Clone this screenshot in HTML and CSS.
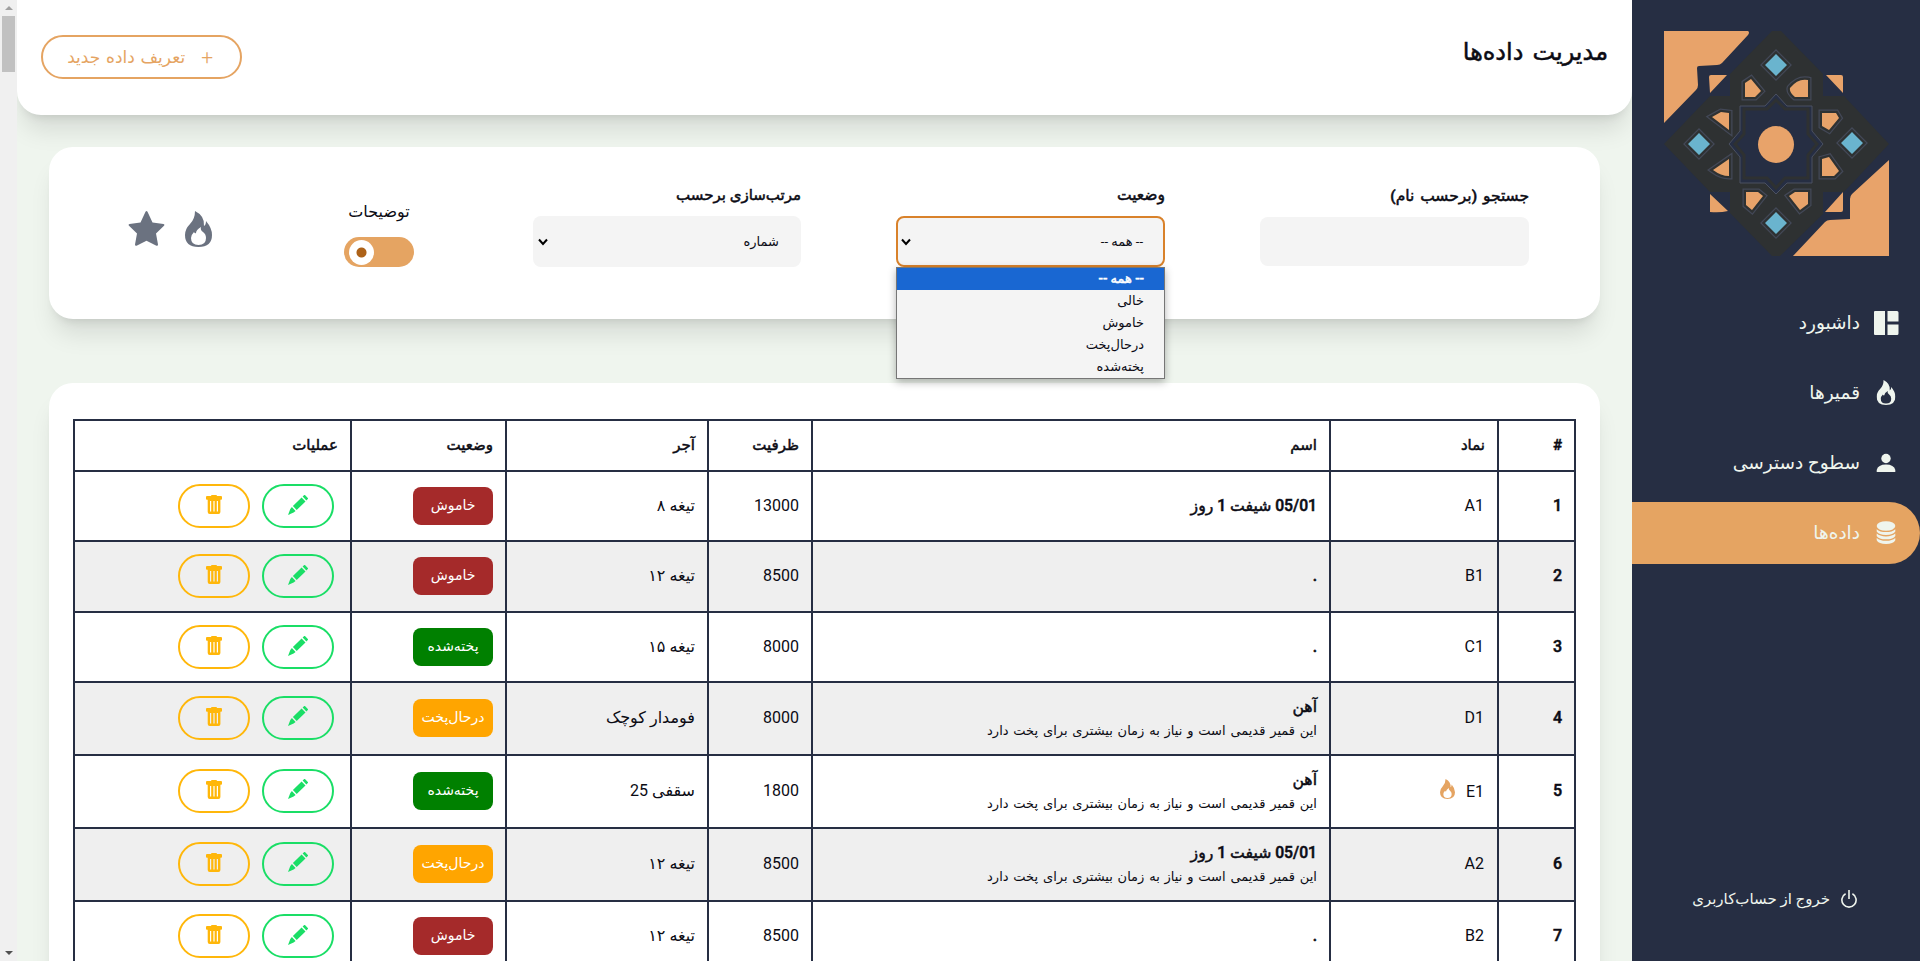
FILE: index.html
```html
<!DOCTYPE html>
<html lang="fa" dir="rtl">
<head>
<meta charset="utf-8">
<title>مدیریت داده‌ها</title>
<link rel="stylesheet" href="styles.css">
</head>
<body>
<svg class="defs" width="0" height="0" aria-hidden="true">
  <symbol id="fire" viewBox="0 0 27 36"><path fill-rule="evenodd" d="M10 0q10 5 9 15 2-1 2-5 6 7 6 14 0 12-13.500 12T0 24Q0 18 5 13T10 0zM11 22q-1 1-2-1-3 3-3 6 0 7 7.500 7T21 27q0-4-3-6-3-2-2-5-5 3-5 6z"/></symbol>
  <symbol id="pencil" viewBox="0 0 20 20"><path d="M14.600 1.600 16 .200q.6-.5 1.200 0l2.600 2.700q.5.600 0 1.200l-1.400 1.400zM13.600 2.500l3.900 4L8.700 15 4.900 11.100zM3.900 12.100l3.700 3.900-2 1.500L0 20l2.300-6z"/></symbol>
  <symbol id="trash" viewBox="0 0 16 19"><path fill-rule="evenodd" d="M5 1Q5 0 6 0h4q1 0 1 1h4q1 0 1 1v2q0 .8-1 .8h-.6V17q0 2-2 2H3.700q-2 0-2-2V4.800H1Q0 4.800 0 4V2q0-1 1-1zM4 6v10.500h1.200V6zm3.400 0v10.500h1.200V6zm3.400 0v10.500H12V6z"/></symbol>
  <path id="petals" d="M81 52l6-4 10 12-6 6H81zM144 66h-13q-6-5-5-9 8-10 18-8zM65 82v17L48 86l9-5zM158 82h14l3 5-10 12-7-4zM65 128v17q-8 0-16-6zM158 128l7-2 10 14-5 5h-12zM82 161h12l5 4-11 14-6-5zM125 165l6-4h13v12l-8 6z"/>
  <path id="gems" d="M112 23l11 11-11 11-11-11zM35 102l11 11-11 11-11-11zM188 101l11 11-11 11-11-11zM112 181l11 11-11 11-11-11z"/>
</svg>
<div class="app">
  <aside class="sidebar">
    <svg class="logo" viewBox="0 0 225 225">
      <g fill="#e8a36a">
        <path d="M0 0H84q2 1 0 4L58 32q-2 2-5 2L35 35q-2 0-2 2l1 17q0 3-2 5L0 92z"/>
        <path d="M225 129v96H129l32-34q2-2 5-2l20-1V168q0-3 2-5z"/>
        <path d="M45 46q0-2 2-2H63L46 62zM162 44h15q2 0 2 2v16zM46 163l18 17q-8 2-18 1zM179 161v18q0 2-2 2h-16z"/>
      </g>
      <path fill="#2e3132" d="M108 0h9l42 43v22h21l45 48-45 48h-21v22l-43 42h-8l-42-43v-21H46L0 113 46 65h20V43z"/>
      <use href="#petals" class="rim"/>
      <use href="#petals" class="gap"/>
      <use href="#petals" fill="#e8a36a"/>
      <use href="#gems" class="rim"/>
      <use href="#gems" class="gap"/>
      <use href="#gems" fill="#6ab4ce"/>
      <path fill="#262e43" stroke="#4a5061" d="M112 63l11 12h25v25l11 13-11 13v26h-25l-11 11-11-11H76v-26l-11-13 11-13V75h25z"/>
      <path fill="#262e43" stroke="#2e3132" stroke-width="3" d="M112 69l9 9h23v25l9 10-9 11v23h-23l-9 10-9-10H80v-23l-9-11 9-10V78h23z"/>
      <ellipse cx="112" cy="113.500" rx="18" ry="18.500" fill="#e8a36a"/>
    </svg>
    <nav class="nav">
      <a class="nav-item"><svg class="nav-icon" viewBox="0 0 26 26"><path d="M2 1h10v24H2q-1 0-1-1V2q0-1 1-1zM14.500 1H24q1.500 0 1.500 1.500v9h-11zM14.500 14.500h11v9q0 1.500-1.500 1.500h-9.500z"/></svg><span>داشبورد</span></a>
      <a class="nav-item"><svg class="nav-icon" viewBox="0 0 26 26"><use href="#fire" x="3.500" y="0" width="19" height="25"/></svg><span>قمیرها</span></a>
      <a class="nav-item"><svg class="nav-icon" viewBox="0 0 26 26"><circle cx="13" cy="8.500" r="4.700"/><path d="M3.700 22v-2Q5 14.500 13 14.500T22.300 20v2z"/></svg><span>سطوح دسترسی</span></a>
      <a class="nav-item active"><svg class="nav-icon" viewBox="0 0 26 26"><ellipse cx="13" cy="6" rx="9.300" ry="4.800"/><path d="M3.700 9.200q3 2.900 9.300 2.900t9.300-2.900v2.400q-2 3.400-9.300 3.400t-9.300-3.400zM3.700 13.600q3 2.800 9.300 2.800t9.300-2.800v2.300q-2 3.400-9.300 3.400t-9.300-3.400zM3.700 17.900q3 2.800 9.300 2.800t9.300-2.800v2.300q-2 3.800-9.300 3.800t-9.300-3.800z"/></svg><span>داده‌ها</span></a>
    </nav>
    <a class="logout"><svg width="16" height="18" viewBox="0 0 16 18"><path d="M4.600 3.800A7.100 7.100 0 1 0 11.400 3.800M8 0v9" fill="none" stroke="#eff5ee" stroke-width="1.600"/></svg><span>خروج از حساب‌کاربری</span></a>
  </aside>
  <main class="content">
    <header class="header">
      <h1 class="title">مدیریت داده‌ها</h1>
      <button class="add"><span class="plus">+</span><span>تعریف داده جدید</span></button>
    </header>
    <section class="card filters">
      <div class="field search"><label class="label">جستجو (برحسب نام)</label><div class="input"></div></div>
      <div class="field status"><label class="label">وضعیت</label>
        <div class="select focus"><span>-- همه --</span><svg class="chev" viewBox="0 0 10 8"><path d="M1 1.500l4 4.500 4-4.500"/></svg></div>
        <ul class="options"><li class="on">-- همه --</li><li>خالی</li><li>خاموش</li><li>درحال‌پخت</li><li>پخته‌شده</li></ul>
      </div>
      <div class="field sort"><label class="label">مرتب‌سازی برحسب</label>
        <div class="select"><span>شماره</span><svg class="chev" viewBox="0 0 10 8"><path d="M1 1.500l4 4.500 4-4.500"/></svg></div>
      </div>
      <div class="toggle-box"><span>توضیحات</span><div class="toggle"><i class="knob"></i></div></div>
      <div class="marks">
        <svg width="27" height="36"><use href="#fire"/></svg>
        <svg width="37" height="35" viewBox="0 0 37 35"><path d="M17.500.800q1-1.600 2 0l5 10.700 11 1.400q1.600.5.500 1.900l-8 7.700 2 11q0 1.600-1.500 1.200l-10-5-10 5q-1.500.4-1.500-1.200l2-11-8-7.700Q-.1 13.400 1.500 12.900l11-1.400z"/></svg>
      </div>
    </section>
    <section class="card list">
      <table class="table">
        <colgroup><col class="c1"><col class="c2"><col class="c3"><col class="c4"><col class="c5"><col class="c6"><col class="c7"></colgroup>
        <thead><tr><th>#</th><th>نماد</th><th>اسم</th><th>ظرفیت</th><th>آجر</th><th>وضعیت</th><th>عملیات</th></tr></thead>
        <tbody id="rows"></tbody>
      </table>
    </section>
  </main>
  <div class="scrollbar"><i class="up"></i><i class="thumb"></i><i class="down"></i></div>
</div>
<script src="rows.js"></script>
</body>
</html>
```
FILE: rows.js
```js
const note = 'این قمیر قدیمی است و نیاز به زمان بیشتری برای پخت دارد';
const shift = '05/01 شیفت 1 روز';
const off = ['off', 'خاموش'], done = ['done', 'پخته‌شده'], baking = ['baking', 'درحال‌پخت'];
const rows = [
  ['A1', shift, '', '13000', 'تیغه ۸', off],
  ['B1', '.', '', '8500', 'تیغه ۱۲', off],
  ['C1', '.', '', '8000', 'تیغه ۱۵', done],
  ['D1', 'آهن', note, '8000', 'فومدار کوچک', baking],
  ['E1', 'آهن', note, '1800', 'سقفی 25', done],
  ['A2', shift, note, '8500', 'تیغه ۱۲', baking],
  ['B2', '.', '', '8500', 'تیغه ۱۲', off]
];
const hot = '<svg class="hot"><use href="#fire"/></svg>';
document.getElementById('rows').innerHTML = rows.map((r, i) => `
<tr class="${r[2] ? 'tall' : i === 1 ? 'mid' : ''}">
  <td class="strong">${i + 1}</td>
  <td class="code"><span>${r[0]}</span>${r[0] === 'E1' ? hot : ''}</td>
  <td class="desc"><div class="name">${r[1]}</div>${r[2] ? `<div class="note">${r[2]}</div>` : ''}</td>
  <td>${r[3]}</td>
  <td>${r[4]}</td>
  <td><span class="badge ${r[5][0]}">${r[5][1]}</span></td>
  <td><div class="actions">
    <button class="act edit"><svg width="20" height="20"><use href="#pencil"/></svg></button>
    <button class="act del"><svg width="16" height="19"><use href="#trash"/></svg></button>
  </div></td>
</tr>`).join('');
```
FILE: styles.css
```css
* { box-sizing: border-box; }
body { margin: 0; font-family: Roboto, "DejaVu Sans", sans-serif; font-size: 16px; color: #0b0b14; overflow: hidden; }
.defs { position: absolute; }
.app { display: flex; width: 1920px; height: 961px; overflow: hidden; background: #eff5ee; }
.sidebar { width: 288px; flex: none; background: #262e43; padding-top: 31px; display: flex; flex-direction: column; position: relative; z-index: 2; }
.logo { width: 225px; height: 225px; margin-right: 31px; flex: none; }
.rim { fill: none; stroke: #434857; stroke-width: 7px; }
.gap { fill: none; stroke: #2e3132; stroke-width: 4.5px; }
.nav { margin-top: 36px; display: flex; flex-direction: column; gap: 8px; }
.nav-item { height: 62px; display: flex; align-items: center; gap: 13px; padding-right: 21px; color: #eff5ee; font-size: 18.5px; border-radius: 0 31px 31px 0; }
.nav-item span { padding-bottom: 1px; }
.nav-item.active { background: #e5a462; }
.nav-icon { width: 26px; height: 26px; fill: #eff5ee; }
.logout { margin-top: auto; margin-bottom: 48px; padding-right: 63px; display: flex; align-items: center; gap: 11px; color: #eff5ee; font-size: 15px; height: 28px; }
.content { flex: 1; min-width: 0; }
.header { height: 115px; background: #fff; border-radius: 0 0 24px 24px; padding: 35px 24px 0; display: flex; justify-content: space-between; align-items: flex-start; }
.header, .card { box-shadow: 0 20px 25px -5px rgba(0,0,0,.1), 0 8px 10px -6px rgba(0,0,0,.1); }
.title, .label, .table th, .strong, .name, .options .on { font-weight: 500; -webkit-text-stroke: .5px currentColor; }
.title { margin: 0; font-size: 24px; line-height: 35px; word-spacing: 3px; }
.add { width: 201px; height: 44px; border: 2px solid #e5a462; border-radius: 22px; background: none; color: #e5a462; font: 17px Roboto, "DejaVu Sans", sans-serif; display: flex; align-items: center; padding: 0 27px; gap: 16px; white-space: nowrap; word-spacing: 1.5px; }
.plus { font-size: 21px; font-weight: 300; }
.card { margin: 32px 32px 0; background: #fff; border-radius: 24px; }
.filters { height: 172px; display: flex; padding: 35px 71px 0 0; position: relative; z-index: 1; }
.field { width: 269px; position: relative; }
.status, .sort { margin-right: 95px; }
.sort { width: 268px; }
.label { display: block; font-size: 15.5px; line-height: 27px; height: 34px; white-space: nowrap; }
.search .label { height: 35px; line-height: 28px; word-spacing: 2px; }
.sort .label { font-size: 15px; }
.input { height: 49px; background: #f4f4f4; border-radius: 8px; }
.select { height: 51px; background: #f4f4f4; border-radius: 8px; display: flex; justify-content: space-between; align-items: center; font-size: 13px; padding: 0 22px 0 5px; }
.select.focus { border: 2px solid #d9822b; padding: 0 20px 0 3px; }
.chev { width: 10px; height: 8px; fill: none; stroke: #000; stroke-width: 2; }
.options { position: absolute; top: 85px; left: 0; width: 269px; margin: 0; padding: 0; list-style: none; background: #f4f4f4; border: 1px solid #767676; font-size: 13px; box-shadow: 0 3px 8px rgba(0,0,0,.3); }
.options li { height: 22px; line-height: 21px; padding-right: 20px; }
.options .on { background: #1967d2; color: #fff; }
.toggle-box { margin-right: 119px; width: 70px; text-align: center; font-size: 16px; line-height: 30px; padding-top: 15px; white-space: nowrap; }
.toggle { height: 30px; margin-top: 10px; border-radius: 15px; background: #e5a462; display: flex; align-items: center; justify-content: flex-end; padding-left: 5px; }
.knob { width: 25px; height: 25px; border-radius: 50%; background: radial-gradient(circle, #ad6218 4.500px, #fff 5.500px); }
.marks { margin-right: 132px; padding-top: 29px; display: flex; gap: 20px; fill: #6b7280; }
.list { margin-top: 64px; padding: 36px 24px; height: 640px; }
.table { border-collapse: collapse; table-layout: fixed; width: 1503px; }
.c1 { width: 77px; } .c2 { width: 168px; } .c3 { width: 518px; } .c4 { width: 104px; } .c5 { width: 202px; } .c6 { width: 155px; } .c7 { width: 277px; }
.table th, .table td { border: 2px solid #262e43; padding: 0 12px; text-align: right; white-space: nowrap; }
.table th { height: 51px; font-size: 15px; padding-bottom: 1px; }
.table td { height: 70px; line-height: 22px; }
.table .mid td { height: 71px; padding-bottom: 1px; }
.table .tall td { height: 73px; padding-bottom: 2px; }
.table .tall .desc { padding: 2px 12px 0; }
.table tbody tr:nth-child(even) { background: #efefef; }
.code span { margin-right: 1px; }
.name { font-size: 15.7px; }
.note { font-size: 13px; line-height: 24px; word-spacing: 1.6px; padding-top: 1px; }
.hot { width: 15px; height: 20px; fill: #e5a462; margin-right: 11px; vertical-align: -2px; }
.badge { display: block; width: 80px; height: 38px; line-height: 36px; border-radius: 8px; color: #fff; font-size: 14px; text-align: center; }
.off { background: #a52a2a; } .done { background: #008000; } .baking { background: #ffa500; }
.actions { display: flex; gap: 12px; padding-right: 4px; }
.act { width: 72px; height: 44px; border-radius: 22px; border: 2px solid; background: none; display: flex; align-items: center; justify-content: center; padding: 0 0 3px; }
.edit { color: #1ade66; fill: #1ade66; } .del { color: #ffb70a; fill: #ffb70a; }
.scrollbar { width: 17px; flex: none; background: #f0f0f0; display: flex; flex-direction: column; align-items: center; }
.up, .down { border: 4px solid transparent; }
.up { border-top: 0; border-bottom-color: #a0a0a0; margin-top: 6px; }
.down { border-bottom: 0; border-top-color: #505050; margin-top: auto; margin-bottom: 6px; }
.thumb { width: 13px; height: 56px; background: #c1c1c1; margin-top: 6px; }
```
